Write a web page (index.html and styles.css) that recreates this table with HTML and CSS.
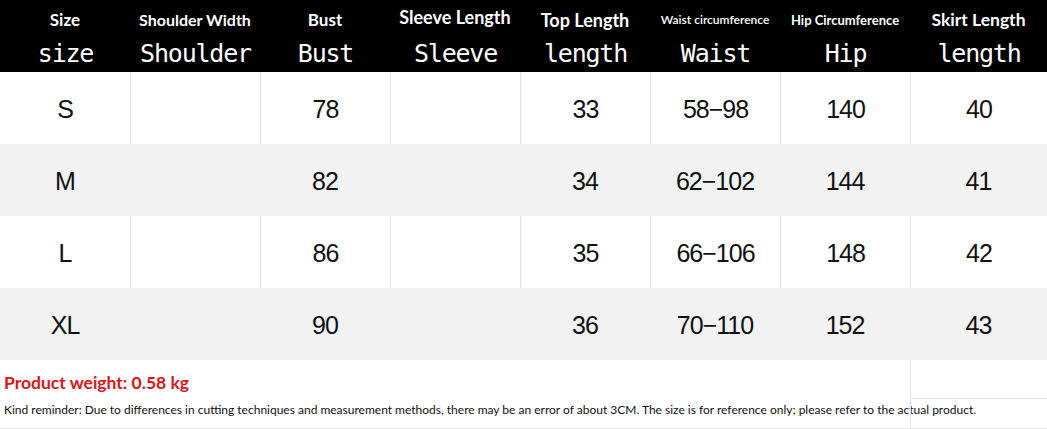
FILE: index.html
```html
<!DOCTYPE html>
<html>
<head>
<meta charset="utf-8">
<link rel="stylesheet" href="styles.css">
</head>
<body>
<div class="chart">
  <div class="head">
    <div class="hc"><span class="en s17">Size</span><span class="mono">size</span></div>
    <div class="hc"><span class="en s16">Shoulder Width</span><span class="mono">Shoulder</span></div>
    <div class="hc"><span class="en s17">Bust</span><span class="mono">Bust</span></div>
    <div class="hc"><span class="en s18 up">Sleeve Length</span><span class="mono">Sleeve</span></div>
    <div class="hc"><span class="en s18">Top Length</span><span class="mono">length</span></div>
    <div class="hc"><span class="en s12">Waist circumference</span><span class="mono">Waist</span></div>
    <div class="hc"><span class="en s13">Hip Circumference</span><span class="mono">Hip</span></div>
    <div class="hc"><span class="en s175">Skirt Length</span><span class="mono">length</span></div>
  </div>
  <div class="row white">
    <div class="c">S</div><div class="c"></div><div class="c">78</div><div class="c"></div><div class="c">33</div><div class="c">58−98</div><div class="c">140</div><div class="c">40</div>
  </div>
  <div class="row gray">
    <div class="c">M</div><div class="c"></div><div class="c">82</div><div class="c"></div><div class="c">34</div><div class="c">62−102</div><div class="c">144</div><div class="c">41</div>
  </div>
  <div class="row white">
    <div class="c">L</div><div class="c"></div><div class="c">86</div><div class="c"></div><div class="c">35</div><div class="c">66−106</div><div class="c">148</div><div class="c">42</div>
  </div>
  <div class="row gray">
    <div class="c">XL</div><div class="c"></div><div class="c">90</div><div class="c"></div><div class="c">36</div><div class="c">70−110</div><div class="c">152</div><div class="c">43</div>
  </div>
  <div class="foot">
    <div class="notes">
      <p class="weight">Product weight: 0.58 kg</p>
      <p class="remind">Kind reminder: Due to differences in cutting techniques and measurement methods, there may be an error of about 3CM. The size is for reference only; please refer to the actual product.</p>
    </div>
    <div class="side">
      <div class="side-top"></div>
      <div class="side-bot"></div>
    </div>
  </div>
</div>
</body>
</html>
```
FILE: styles.css
```css
* { box-sizing: border-box; }
html, body { margin: 0; padding: 0; background: #fff; }
.chart { width: 1047px; height: 429px; overflow: hidden; }
.head, .row {
  display: grid;
  grid-template-columns: repeat(7, 130px) 1fr;
}
.head { background: #000; height: 72px; }
.hc {
  display: flex;
  flex-direction: column;
  align-items: center;
  color: #fff;
}
.en {
  font-family: Lato, "Open Sans", sans-serif;
  font-weight: 700;
  height: 32px;
  display: flex;
  align-items: flex-end;
  padding-bottom: 2px;
  white-space: nowrap;
}
.s12 { font-size: 12px; padding-bottom: 5px; font-weight: 600; }
.s13 { font-size: 13px; padding-bottom: 4px; }
.s16 { font-size: 16px; padding-bottom: 3px; }
.s17 { font-size: 17px; padding-bottom: 2px; }
.s175 { font-size: 17.5px; padding-bottom: 2px; }
.s18 { font-size: 18px; padding-bottom: 1px; }
.up { padding-bottom: 4px; }
.mono {
  font-family: "DejaVu Sans Mono", "Liberation Mono", monospace;
  font-size: 25px;
  letter-spacing: -1.2px;
  line-height: 30px;
  margin-top: 7px;
  padding-left: 1px;
}
.row { height: 72px; }
.gray { background: #f2f2f2; }
.c {
  display: flex;
  align-items: center;
  justify-content: center;
  font-family: "Liberation Sans", Arial, sans-serif;
  font-size: 25px;
  letter-spacing: -1px;
  color: #111;
  padding-top: 3px;
}
.white .c + .c { border-left: 1px solid #e2e2e2; }
.foot {
  display: grid;
  grid-template-columns: 910px 1fr;
  height: 69px;
  border-bottom: 1px solid #e6e6e6;
}
.notes { padding: 11px 0 0 4px; }
.weight {
  margin: 0;
  font-family: Lato, sans-serif;
  font-weight: 700;
  font-size: 17.5px;
  color: #e3121b;
  line-height: 24px;
}
.remind {
  margin: 7px 0 0;
  font-family: Lato, sans-serif;
  font-size: 12px;
  color: #111;
  white-space: nowrap;
  line-height: 16px;
}
.side { border-left: 1px solid #e2e2e2; display: flex; flex-direction: column; }
.side-top { height: 39px; border-bottom: 1px solid #e2e2e2; }
.side-bot { flex: 1; }
```
